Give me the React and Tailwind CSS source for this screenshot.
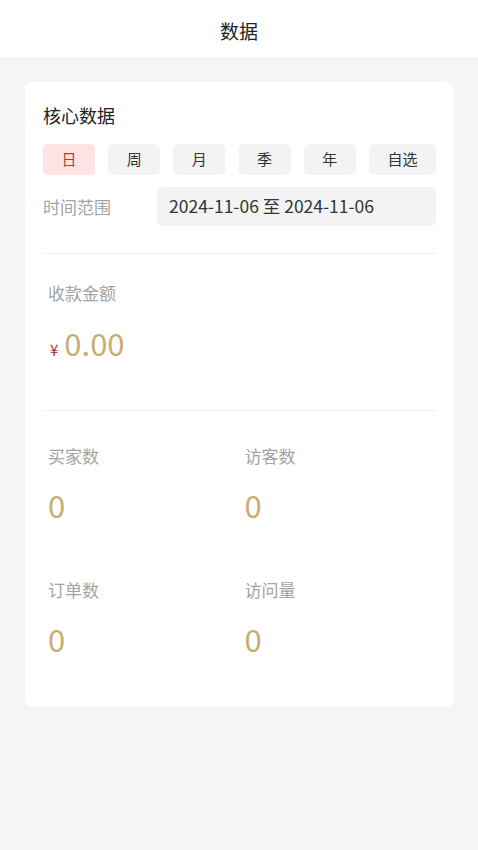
import React, { useState } from 'react';

const PERIODS = ['日', '周', '月', '季', '年', '自选'];

const STATS = [
  { label: '买家数', value: '0' },
  { label: '访客数', value: '0' },
  { label: '订单数', value: '0' },
  { label: '访问量', value: '0' },
];

export default function App() {
  const [period, setPeriod] = useState('日');

  return (
    <div
      className="min-h-[850px] bg-[#f5f5f5] text-[#333]"
      style={{ fontFamily: '"Noto Sans CJK SC", "Noto Sans", sans-serif' }}
    >
      {/* Header */}
      <div className="h-[57px] bg-white flex items-center justify-center">
        <h1 className="text-[19px] text-[#222] pt-[6px]">数据</h1>
      </div>

      {/* Card */}
      <div className="mt-[25px] ml-[25px] mr-[24px] bg-white rounded-[8px] px-[18px] pt-[20px] pb-[48px]">
        <div className="text-[18px] leading-[26px] text-[#222]">核心数据</div>

        {/* Period buttons */}
        <div className="mt-[16px] flex justify-between">
          {PERIODS.map(p => (
            <button
              key={p}
              type="button"
              onClick={() => setPeriod(p)}
              className={
                (p === '自选' ? 'w-[67px] ' : 'w-[52px] ') +
                'h-[31px] rounded-[5px] text-[15px] ' +
                (period === p ? 'bg-[#fde3e3] text-[#c0392b]' : 'bg-[#f3f3f3] text-[#333]')
              }
            >
              {p}
            </button>
          ))}
        </div>

        {/* Time range */}
        <div className="mt-[12px] flex items-center">
          <span className="w-[114px] text-[17px] text-[#a3a3a3]">时间范围</span>
          <div className="flex-1 h-[39px] rounded-[5px] bg-[#f3f3f3] flex items-center px-[12px] text-[17.5px] text-[#333]">
            2024-11-06 至 2024-11-06
          </div>
        </div>

        <div className="mt-[27px] border-t border-[#eeeeee]" />

        {/* Income */}
        <div className="px-[5px] pt-[26px] pb-[47px]">
          <div className="text-[17px] leading-[26px] text-[#a3a3a3]">收款金额</div>
          <div className="mt-[17px] flex items-baseline">
            <span className="text-[15px] text-[#b3263a] ml-[2px] mr-[6px]">¥</span>
            <span className="text-[31px] leading-[40px] text-[#c8ad72]">0.00</span>
          </div>
        </div>

        <div className="border-t border-[#eeeeee]" />

        {/* Stats */}
        <div className="pt-[32px] grid grid-cols-2 gap-y-[52px]">
          {STATS.map(s => (
            <div key={s.label} className="px-[5px]">
              <div className="text-[17px] leading-[26px] text-[#a3a3a3]">{s.label}</div>
              <div className="mt-[16px] text-[31px] leading-[40px] text-[#c8ad72]">{s.value}</div>
            </div>
          ))}
        </div>
      </div>
    </div>
  );
}
